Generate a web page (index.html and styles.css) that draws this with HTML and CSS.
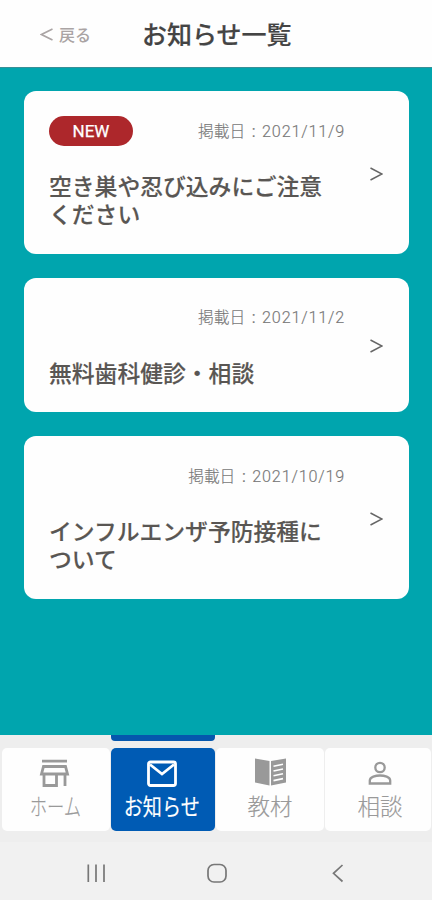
FILE: index.html
```html
<!DOCTYPE html>
<html lang="ja">
<head>
<meta charset="utf-8">
<meta name="viewport" content="width=device-width, initial-scale=1">
<title>お知らせ一覧</title>
<link rel="stylesheet" href="styles.css">
</head>
<body>
<header class="header">
  <a class="back"><svg class="back-icon" viewBox="0 0 13 13"><path d="M12.5 1 1.5 6.5l11 5.5"/></svg><span>戻る</span></a>
  <h1 class="title">お知らせ一覧</h1>
</header>
<main class="list">
  <article class="card tall">
    <div class="body">
      <div class="meta"><span class="badge">NEW</span><span class="date">掲載日<i>:</i><b>2021/11/9</b></span></div>
      <h2 class="subject">空き巣や忍び込みにご注意<br>ください</h2>
    </div>
    <svg class="arrow" viewBox="0 0 13 14"><path d="M.5 1 12 7 .5 13"/></svg>
  </article>
  <article class="card short">
    <div class="body">
      <div class="meta"><span class="date">掲載日<i>:</i><b>2021/11/2</b></span></div>
      <h2 class="subject">無料歯科健診・相談</h2>
    </div>
    <svg class="arrow" viewBox="0 0 13 14"><path d="M.5 1 12 7 .5 13"/></svg>
  </article>
  <article class="card tall">
    <div class="body">
      <div class="meta"><span class="date">掲載日<i>:</i><b>2021/10/19</b></span></div>
      <h2 class="subject">インフルエンザ予防接種に<br>ついて</h2>
    </div>
    <svg class="arrow" viewBox="0 0 13 14"><path d="M.5 1 12 7 .5 13"/></svg>
  </article>
</main>
<nav class="tabs">
  <a class="tab shift-left">
    <svg class="icon" viewBox="0 0 32 30"><path class="line" d="M3 3.2h25M4.5 8.500h22l2 7.500H2.500zM5 16v11.500h12.500V16M26 16v12"/></svg>
    <span class="label kana-home">ホーム</span>
  </a>
  <a class="tab active shift-left">
    <svg class="icon" viewBox="0 0 32 30"><rect class="line" x="2.500" y="4" width="27" height="23.500" rx="2"/><path class="line" d="m4 6.500 12 9.500 12-9.500"/></svg>
    <span class="label kana-news">お知らせ</span>
  </a>
  <a class="tab">
    <svg class="icon" viewBox="0 0 32 30"><path class="solid" d="M1 .5 15.500 3v24.500L1 24.500z"/><path class="solid" d="M17 3 32 .5v24L17 27.500z"/><path class="cut" d="m19.500 8.200 9.500-2M19.500 13l9.500-2M19.500 17.800l9.500-2M19.500 22.600l9.500-2"/></svg>
    <span class="label">教材</span>
  </a>
  <a class="tab shift-right">
    <svg class="icon" viewBox="0 0 32 30"><circle class="line thin" cx="16" cy="9.500" r="4.700"/><path class="line thin" d="M5.800 25.500v-3c0-3.500 6-5 10.200-5s10.200 1.500 10.200 5v3z"/></svg>
    <span class="label">相談</span>
  </a>
</nav>
<footer class="system">
  <svg class="sys" viewBox="0 0 24 24"><path d="M4.300 3.500v17.500M12 3.500v17.500M20 3.500v17.500"/></svg>
  <svg class="sys" viewBox="0 0 24 24"><rect x="3" y="3.500" width="18" height="17.500" rx="6"/></svg>
  <svg class="sys" viewBox="0 0 24 24"><path d="m16.500 4-9 8.300 9 8.200"/></svg>
</footer>
</body>
</html>
```
FILE: styles.css
```css
* { box-sizing: border-box; }
body {
  margin: 0;
  width: 432px;
  height: 900px;
  display: flex;
  flex-direction: column;
  overflow: hidden;
  background: #f1f1f1;
  font-family: Roboto, "Noto Sans CJK JP", sans-serif;
}
h1, h2 { margin: 0; }
svg { display: block; fill: none; flex: none; }
.header {
  height: 68px;
  display: flex;
  align-items: center;
  padding-left: 40px;
  background: #fefefe;
  border-bottom: 1px solid #398f96;
}
.back {
  width: 102px;
  display: flex;
  align-items: center;
  gap: 6px;
  color: #aaa4a4;
  font-size: 16px;
  font-weight: 500;
}
.back-icon { width: 13px; height: 13px; margin-top: 2px; stroke: #aaa4a4; stroke-width: 1.6; }
.title {
  padding-top: 5px;
  color: #444;
  font-size: 25px;
  font-weight: 500;
  line-height: 36px;
  white-space: nowrap;
  -webkit-text-stroke: .2px #444;
}
.list {
  height: 667px;
  padding: 23px 23px 0 24px;
  display: flex;
  flex-direction: column;
  gap: 24px;
  background: #00a5ae;
}
.card {
  display: flex;
  align-items: center;
  padding: 0 26px 0 25px;
  border-radius: 12px;
  background: #fefefe;
}
.tall { height: 162.500px; }
.short { height: 134.500px; }
.body { width: 296px; margin-right: 25px; align-self: flex-start; padding-top: 24px; }
.meta { height: 31px; display: flex; align-items: center; }
.badge {
  width: 84px;
  height: 30px;
  border-radius: 15px;
  background: #ad272b;
  color: #fff;
  font-size: 17px;
  font-weight: 400;
  -webkit-text-stroke: .25px #fff;
  line-height: 31px;
  text-align: center;
}
.date {
  margin-left: auto;
  padding-top: 2px;
  display: flex;
  color: #777;
  font-size: 15.700px;
  font-weight: 300;
  line-height: 24px;
  -webkit-text-stroke: .15px #777;
}
.date i { width: 17px; text-align: center; font-style: normal; font-weight: 400; }
.date b { font-weight: 300; font-size: 16.200px; letter-spacing: .8px; }
.subject {
  margin-top: 28px;
  color: #595653;
  font-size: 22.800px;
  font-weight: 500;
  line-height: 28px;
  white-space: nowrap;
  -webkit-text-stroke: .15px #595653;
}
.arrow { width: 13px; height: 14px; margin-top: 3px; stroke: #666; stroke-width: 1.5; }
.tabs {
  height: 107px;
  padding: 13px 0 11px 2px;
  display: grid;
  grid-template-columns: 108px 104px 108px 106px;
  column-gap: 1px;
  background: #eee;
}
.tab {
  position: relative;
  display: flex;
  flex-direction: column;
  align-items: center;
  padding-top: 10px;
  border-radius: 5px;
  background: #fefefe;
  color: #999;
}
.shift-left { padding-right: 2px; }
.shift-right { padding-left: 4px; }
.active { background: #005bb4; color: #fff; }
.active::before {
  content: "";
  position: absolute;
  left: 0;
  right: 0;
  top: -13px;
  height: 6px;
  border-radius: 0 0 4px 4px;
  background: #0557ad;
}
.icon { width: 32px; height: 30px; }
.line { stroke: currentColor; stroke-width: 2.800; }
.thin { stroke-width: 2.300; }
.solid { fill: currentColor; }
.cut { stroke: #fff; stroke-width: 1.600; }
.label {
  font-size: 22.500px;
  font-weight: 300;
  line-height: 30px;
  margin-top: 4px;
  white-space: nowrap;
  -webkit-text-stroke: .15px currentColor;
}
.kana-home { transform: scaleX(.77); }
.kana-news { transform: scaleX(.85); font-weight: 400; }
.system {
  height: 58px;
  display: flex;
  justify-content: space-between;
  align-items: center;
  padding: 3px 82px 0 84px;
}
.sys { width: 24px; height: 24px; stroke: #777; stroke-width: 1.700; }
```
